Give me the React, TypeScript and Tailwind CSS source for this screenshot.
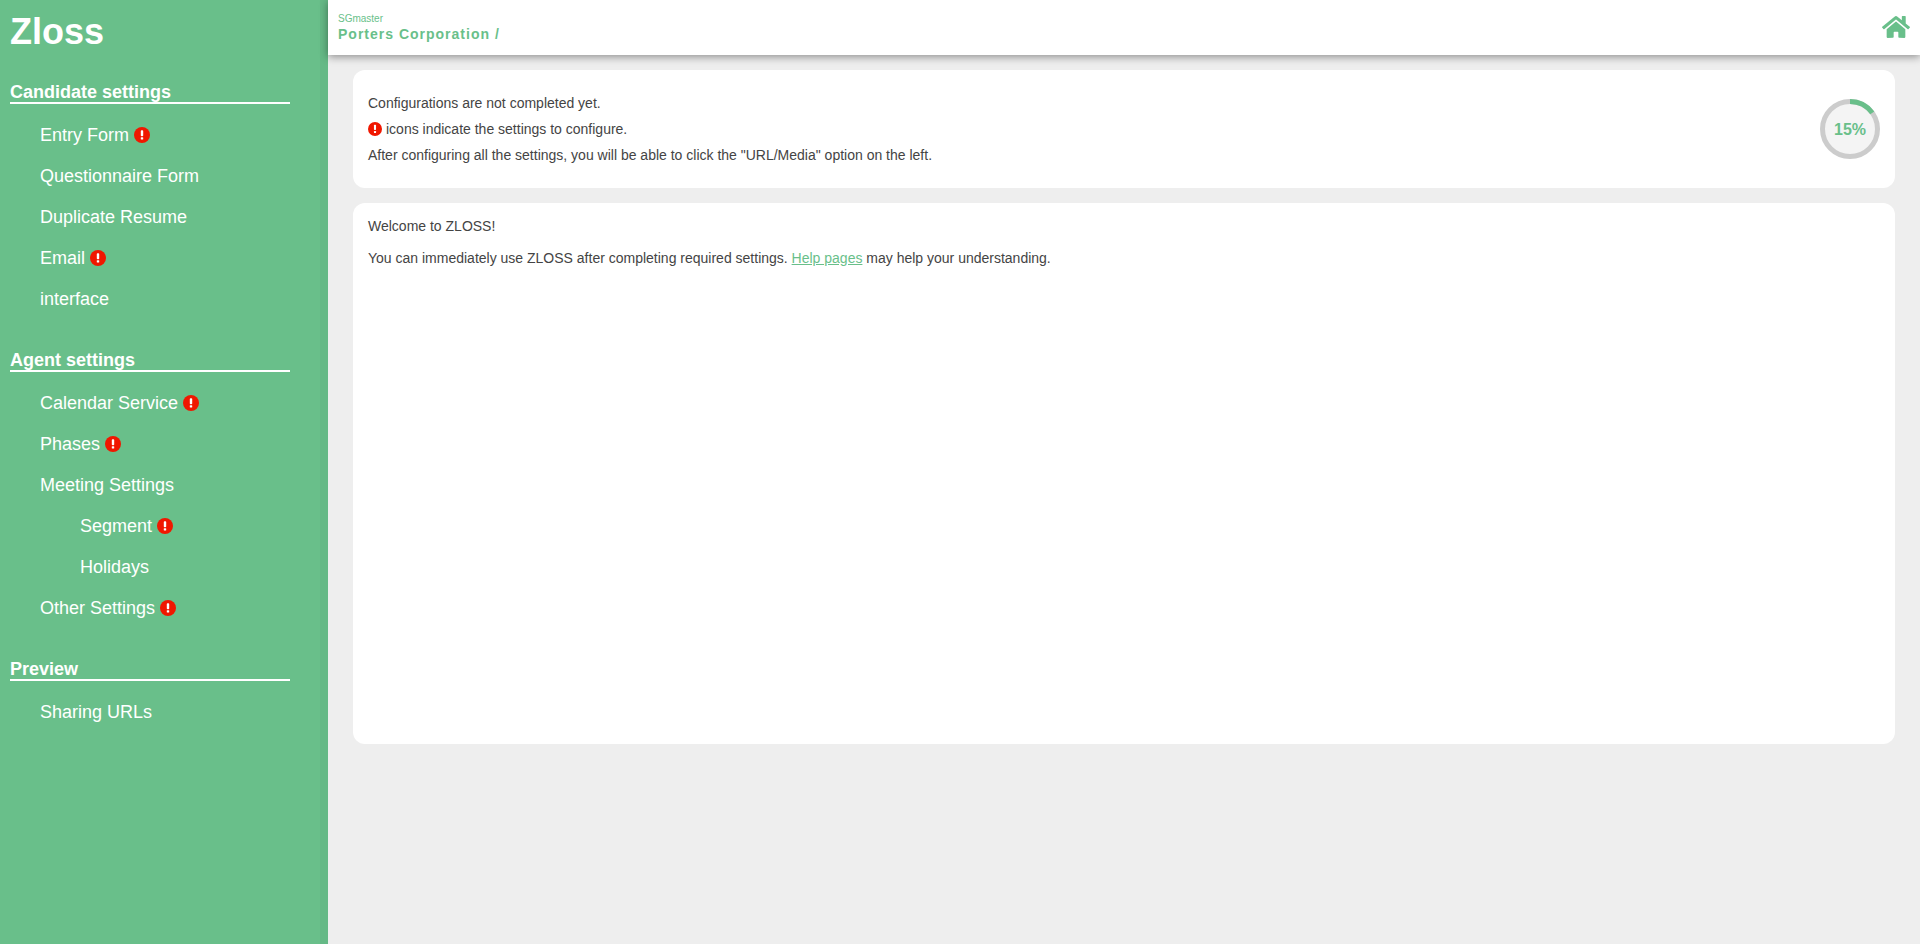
import { FaHome } from "react-icons/fa"

type NavItem = { label: string; alert?: boolean; sub?: boolean }

const sections: { title: string; items: NavItem[] }[] = [
  {
    title: "Candidate settings",
    items: [
      { label: "Entry Form", alert: true },
      { label: "Questionnaire Form" },
      { label: "Duplicate Resume" },
      { label: "Email", alert: true },
      { label: "interface" },
    ],
  },
  {
    title: "Agent settings",
    items: [
      { label: "Calendar Service", alert: true },
      { label: "Phases", alert: true },
      { label: "Meeting Settings" },
      { label: "Segment", alert: true, sub: true },
      { label: "Holidays", sub: true },
      { label: "Other Settings", alert: true },
    ],
  },
  {
    title: "Preview",
    items: [{ label: "Sharing URLs" }],
  },
]

function AlertIcon() {
  return (
    <svg width="16" height="16" viewBox="0 0 16 16" className="shrink-0" aria-hidden="true">
      <circle cx="8" cy="8" r="8" fill="#f01700" />
      <rect x="6.8" y="3.2" width="2.4" height="6" rx="0.8" fill="#fff" />
      <rect x="6.8" y="10.2" width="2.4" height="2.4" rx="0.6" fill="#fff" />
    </svg>
  )
}

function ProgressRing() {
  return (
    <div className="relative w-[60px] h-[60px] shrink-0">
      <svg width="60" height="60" viewBox="0 0 60 60" aria-hidden="true">
        <circle cx="30" cy="30" r="27.5" fill="#f4f4f4" stroke="#cccccc" strokeWidth="5" />
        <circle
          cx="30"
          cy="30"
          r="27.5"
          fill="none"
          stroke="#69bf8a"
          strokeWidth="5"
          strokeDasharray="25.9 172.8"
          transform="rotate(-90 30 30)"
        />
      </svg>
      <span className="absolute inset-0 flex items-center justify-center pt-[1px] text-[16px] font-bold text-[#69bf8a]">
        15%
      </span>
    </div>
  )
}

export default function App() {
  return (
    <div className="flex h-[944px] overflow-hidden bg-[#eeeeee] font-['Liberation_Sans',Arial,sans-serif]">
      {/* Sidebar */}
      <aside className="w-[328px] shrink-0 bg-[#69bf8a] border-r-[8px] border-[#65b986] text-white">
        <h1 className="pl-[10px] pt-[11px] text-[36px] leading-[41px] font-bold">Zloss</h1>
        {sections.map((section) => (
          <section key={section.title} className="mt-[30px] mb-[19px]">
            <h2 className="ml-[10px] w-[280px] border-b-2 border-white text-[18px] leading-[20px] font-bold">
              {section.title}
            </h2>
            <ul className="mt-[11px]">
              {section.items.map((item) => (
                <li
                  key={item.label}
                  className={`flex items-center gap-[5px] h-[41px] text-[18px] ${item.sub ? "pl-[80px]" : "pl-[40px]"}`}
                >
                  {item.label}
                  {item.alert && (
                    <span className="flex -mt-[2px]">
                      <AlertIcon />
                    </span>
                  )}
                </li>
              ))}
            </ul>
          </section>
        ))}
      </aside>

      <div className="flex-1 min-w-0">
        {/* Header */}
        <header className="relative flex items-center justify-between h-[55px] bg-white pl-[10px] pr-[10px] shadow-[0_2px_8px_rgba(0,0,0,0.4)]">
          <div className="pt-[1px]">
            <div className="text-[10px] leading-[12px] text-[#69bf8a]">SGmaster</div>
            <div className="text-[14px] leading-[18px] font-bold tracking-[1px] text-[#69bf8a]">
              Porters Corporation /
            </div>
          </div>
          <FaHome className="text-[#69bf8a] w-[28px] h-[28px] mb-[2px]" />
        </header>

        <main className="pl-[25px] pr-[25px] pt-[15px] text-[14px] text-[#444444]">
          <div className="flex items-center justify-between h-[118px] bg-white rounded-[12px] pl-[15px] pr-[15px]">
            <div className="leading-[26px]">
              <p>Configurations are not completed yet.</p>
              <p className="flex items-center gap-[4px]">
                <span className="[&>svg]:w-[14px] [&>svg]:h-[14px] flex">
                  <AlertIcon />
                </span>
                icons indicate the settings to configure.
              </p>
              <p>After configuring all the settings, you will be able to click the "URL/Media" option on the left.</p>
            </div>
            <ProgressRing />
          </div>

          <div className="mt-[15px] h-[541px] bg-white rounded-[12px] px-[15px] pt-[13px]">
            <p className="leading-[20px]">Welcome to ZLOSS!</p>
            <p className="mt-[12px] leading-[20px]">
              You can immediately use ZLOSS after completing required settings.{" "}
              <a href="#" className="underline text-[#69bf8a]">
                Help pages
              </a>{" "}
              may help your understanding.
            </p>
          </div>
        </main>
      </div>
    </div>
  )
}
